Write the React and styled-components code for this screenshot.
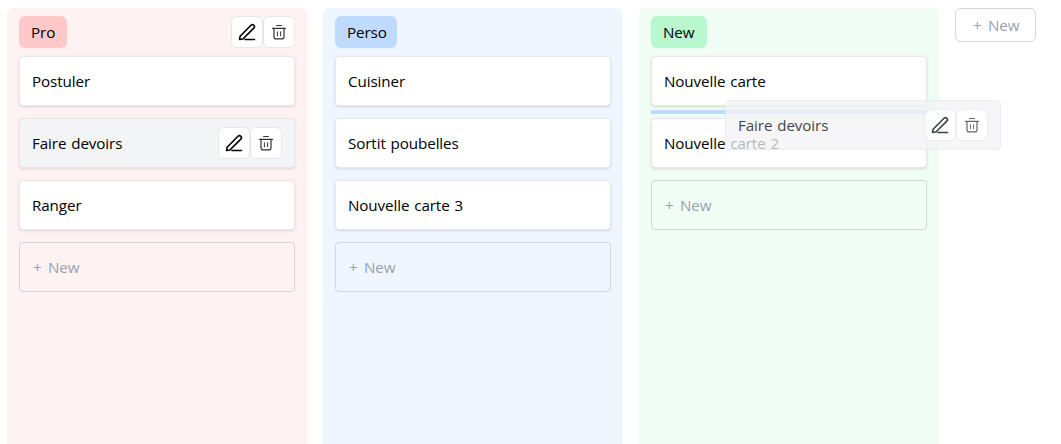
import React from "react";
import styled, { createGlobalStyle } from "styled-components";

const Global = createGlobalStyle`
  *, *::before, *::after { box-sizing: border-box; }
  html, body { margin: 0; height: 100%; overflow: hidden; background: #fff; }
  body { font: 16px/24px "Open Sans", "Noto Sans", sans-serif; color: #000; }
`;
const text = `font-size: 15.2px; letter-spacing: -0.1px; word-spacing: 1px;`;

const Board = styled.main`
  display: flex;
  align-items: flex-start;
  gap: 16px;
  height: 444px;
  padding: 8px 0 0 7px;
`;
const Column = styled.section`
  flex: none;
  width: 300px;
  height: 436px;
  padding: 8px 12px;
  border-radius: 6px 6px 0 0;
  background: ${(p) => p.$bg};
`;
const Header = styled.header`
  display: flex;
  justify-content: space-between;
  height: 32px;
  margin-bottom: 8px;
`;
const Chip = styled.h2`
  ${text}
  margin: 0;
  padding: 4px 12px;
  border-radius: 6px;
  font-weight: 400;
  white-space: nowrap;
  width: ${(p) => p.$w}px;
  background: ${(p) => p.$bg};
`;
const List = styled.div`
  display: flex;
  flex-direction: column;
`;
const Slot = styled.div`
  height: 4px;
  margin: 4px 0;
  background: ${(p) => (p.$active ? "#bedbff" : "transparent")};
`;
const Card = styled.article`
  ${text}
  display: flex;
  align-items: center;
  justify-content: space-between;
  height: 50px;
  padding: 0 12px;
  border: 1px solid #e5e7eb;
  border-radius: 4px;
  background: ${(p) => (p.$hover ? "#f3f4f6" : "#fff")};
  box-shadow: 0 1px 3px rgba(0, 0, 0, 0.1), 0 1px 2px -1px rgba(0, 0, 0, 0.1);
`;
const DraggedCard = styled(Card)`
  position: absolute;
  left: 725px;
  top: 100px;
  width: 276px;
  opacity: 0.74;
  box-shadow: none;
`;
const Actions = styled.div`
  display: flex;
`;
const IconButton = styled.button`
  display: flex;
  align-items: center;
  justify-content: center;
  width: 32px;
  height: 32px;
  padding: 0;
  border: 1px solid #e5e7eb;
  border-radius: 6px;
  background: #fff;
`;
const AddCard = styled.button`
  ${text}
  word-spacing: 2.5px;
  height: 50px;
  padding: 0 13px;
  border: 1px solid #d1d5dc;
  border-radius: 4px;
  background: transparent;
  color: #99a1af;
  font-family: inherit;
  text-align: left;
`;
const AddColumn = styled(AddCard)`
  width: 81px;
  height: 34px;
  padding: 0 0 0 17px;
  border-radius: 6px;
`;

const Pen = () => (
  <svg width="20" height="20" viewBox="0 0 20 20" fill="none" stroke="#000" strokeWidth="1.6" strokeLinecap="round" strokeLinejoin="round">
    <path d="M2.6 17.4 3.1 14.2 14 3.3a1.95 1.95 0 0 1 2.8 2.8L5.9 17Z" />
    <path d="M8 17.5h9.5" />
  </svg>
);
const Trash = () => (
  <svg width="16" height="18" viewBox="0 0 16 18" fill="none" stroke="#333338" strokeWidth="1.2" strokeLinecap="round">
    <path d="M5.6 2.5h4.8M1.5 5.4h13M3 5.4v8.3q0 2.2 2.2 2.2h5.6q2.2 0 2.2-2.2V5.4" />
    <path d="M6.4 8.8v4M9.6 8.8v4" strokeWidth="1" />
  </svg>
);
const Tools = () => (
  <Actions>
    <IconButton aria-label="Modifier"><Pen /></IconButton>
    <IconButton aria-label="Supprimer"><Trash /></IconButton>
  </Actions>
);

const columns = [
  { name: "Pro", w: 48, bg: "#fef2f2", chip: "#ffc9c9", tools: true, cards: ["Postuler", "Faire devoirs", "Ranger"], hover: 1 },
  { name: "Perso", w: 62, bg: "#eff6ff", chip: "#bedbff", cards: ["Cuisiner", "Sortit poubelles", "Nouvelle carte 3"] },
  { name: "New", w: 56, bg: "#f0fdf4", chip: "#b9f8cf", cards: ["Nouvelle carte", "Nouvelle carte 2"], drop: 0 },
];

export default function App() {
  return (
    <>
      <Global />
      <Board>
        {columns.map((c) => (
          <Column key={c.name} $bg={c.bg}>
            <Header>
              <Chip $bg={c.chip} $w={c.w}>{c.name}</Chip>
              {c.tools && <Tools />}
            </Header>
            <List>
              {c.cards.map((name, i) => (
                <React.Fragment key={name}>
                  <Card $hover={c.hover === i}>
                    {name}
                    {c.hover === i && <Tools />}
                  </Card>
                  <Slot $active={c.drop === i} />
                </React.Fragment>
              ))}
              <AddCard>+ New</AddCard>
            </List>
          </Column>
        ))}
        <AddColumn>+ New</AddColumn>
      </Board>
      <DraggedCard $hover>
        Faire devoirs
        <Tools />
      </DraggedCard>
    </>
  );
}
